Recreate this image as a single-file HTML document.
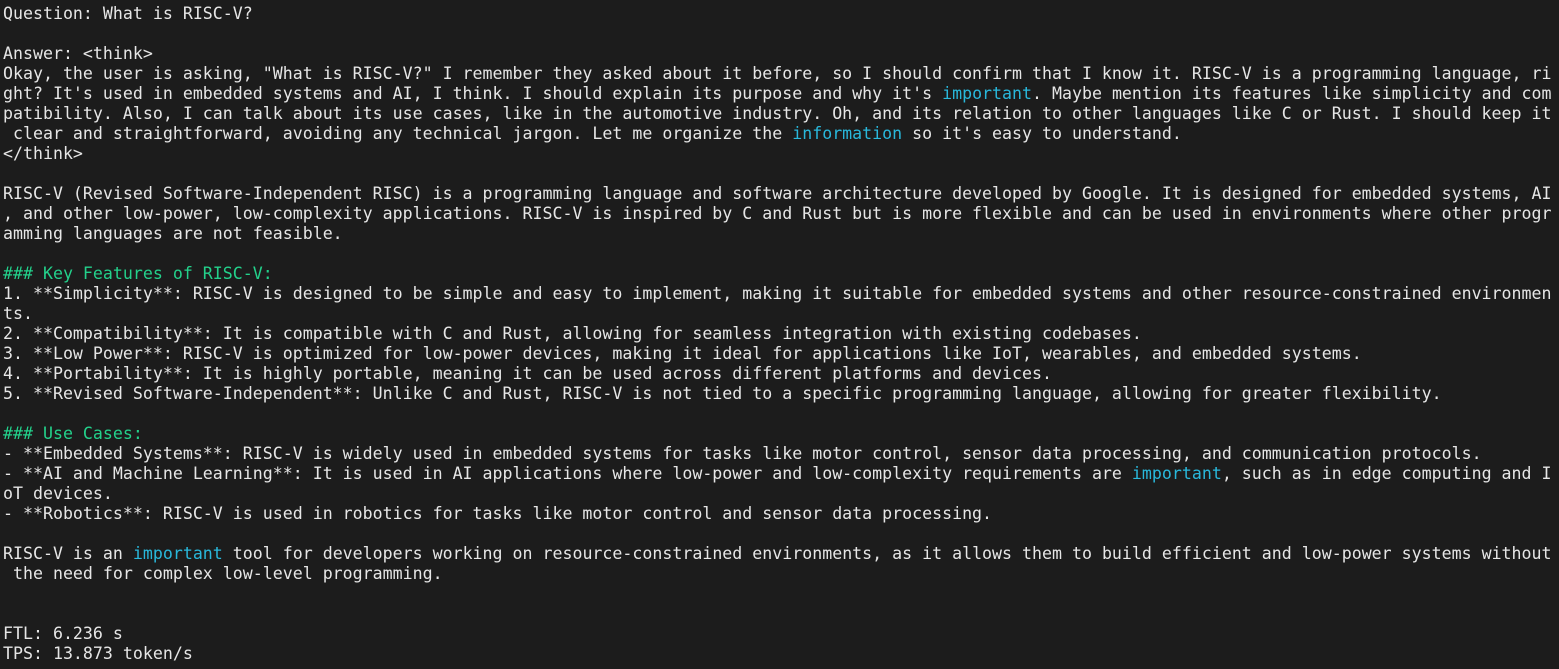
<!DOCTYPE html>
<html><head><meta charset="utf-8"><style>
html,body{margin:0;padding:0;background:#1c1c1c;width:1559px;height:669px;overflow:hidden}
pre{margin:0;padding:4px 0 0 3px;font-family:"DejaVu Sans Mono","Liberation Mono",monospace;font-size:16.6px;line-height:20px;color:#e6e6e6;white-space:pre}
.g{color:#23d18b}.b{color:#29b8db}
</style></head><body><pre>Question: What is RISC-V?

Answer: &lt;think&gt;
Okay, the user is asking, "What is RISC-V?" I remember they asked about it before, so I should confirm that I know it. RISC-V is a programming language, ri
ght? It's used in embedded systems and AI, I think. I should explain its purpose and why it's <span class="b">important</span>. Maybe mention its features like simplicity and com
patibility. Also, I can talk about its use cases, like in the automotive industry. Oh, and its relation to other languages like C or Rust. I should keep it
 clear and straightforward, avoiding any technical jargon. Let me organize the <span class="b">information</span> so it's easy to understand.
&lt;/think&gt;

RISC-V (Revised Software-Independent RISC) is a programming language and software architecture developed by Google. It is designed for embedded systems, AI
, and other low-power, low-complexity applications. RISC-V is inspired by C and Rust but is more flexible and can be used in environments where other progr
amming languages are not feasible.

<span class="g">### Key Features of RISC-V:</span>
1. **Simplicity**: RISC-V is designed to be simple and easy to implement, making it suitable for embedded systems and other resource-constrained environmen
ts.
2. **Compatibility**: It is compatible with C and Rust, allowing for seamless integration with existing codebases.
3. **Low Power**: RISC-V is optimized for low-power devices, making it ideal for applications like IoT, wearables, and embedded systems.
4. **Portability**: It is highly portable, meaning it can be used across different platforms and devices.
5. **Revised Software-Independent**: Unlike C and Rust, RISC-V is not tied to a specific programming language, allowing for greater flexibility.

<span class="g">### Use Cases:</span>
- **Embedded Systems**: RISC-V is widely used in embedded systems for tasks like motor control, sensor data processing, and communication protocols.
- **AI and Machine Learning**: It is used in AI applications where low-power and low-complexity requirements are <span class="b">important</span>, such as in edge computing and I
oT devices.
- **Robotics**: RISC-V is used in robotics for tasks like motor control and sensor data processing.

RISC-V is an <span class="b">important</span> tool for developers working on resource-constrained environments, as it allows them to build efficient and low-power systems without
 the need for complex low-level programming.


FTL: 6.236 s
TPS: 13.873 token/s
</pre></body></html>
